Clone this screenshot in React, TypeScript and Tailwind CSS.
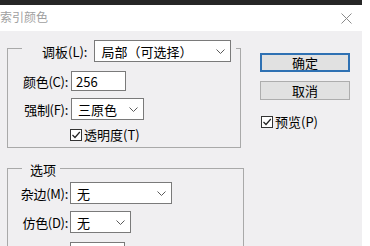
import React from "react";

const Chevron = () => (
  <svg width="9" height="5" viewBox="0 0 9 5" className="shrink-0">
    <path d="M0.5 0.5 L4.5 4.5 L8.5 0.5" fill="none" stroke="#5a5a5a" strokeWidth="1" />
  </svg>
);

const Select = ({ value, w }: { value: string; w: string }) => (
  <div className={`${w} h-[22px] bg-white border border-[#7a7a7a] flex items-center justify-between pl-[6px] pr-[5px] shrink-0`}>
    <span className="text-[13px] leading-none text-black">{value}</span>
    <Chevron />
  </div>
);

const Check = ({ label }: { label: string }) => (
  <div className="flex items-center gap-[2px] h-[13px]">
    <div className="w-[12px] h-[12px] bg-white border border-[#333] flex items-center justify-center">
      <svg width="10" height="10" viewBox="0 0 10 10">
        <path d="M1.5 5 L4 7.5 L8.8 2" fill="none" stroke="#222" strokeWidth="1.2" />
      </svg>
    </div>
    <span className="text-[13px] leading-none text-black">{label}</span>
  </div>
);

const Label = ({ text }: { text: string }) => (
  <span className="w-[52px] ml-[8px] text-right text-[13px] leading-none text-black shrink-0 tracking-[-0.3px]">{text}</span>
);

export default function App() {
  return (
    <div className="w-[370px] h-[246px] bg-white overflow-hidden font-['Noto_Sans_CJK_SC','Noto_Sans',sans-serif]">
      <div className="w-[362px] h-full flex flex-col">
        <div className="h-[5px] bg-[#262626] shrink-0" />
        <div className="h-[26px] bg-white flex items-center justify-between shrink-0">
          <span className="text-[12px] leading-none text-[#a0a0a0] mb-[2px]">索引颜色</span>
          <svg width="11" height="11" viewBox="0 0 11 11" className="mr-[10px]">
            <path d="M0.5 0.5 L10.5 10.5 M10.5 0.5 L0.5 10.5" stroke="#8a8a8a" strokeWidth="1" />
          </svg>
        </div>
        <div className="flex-1 bg-[#f0eff1] flex">
          <div className="w-[260px] shrink-0 pl-[7px] pt-[4px] flex flex-col">
            <fieldset className="w-[234px] border border-[#a9a9a9] pb-[6px]">
              <legend className="ml-[14px] pl-[20px] pr-[5px] pt-[5px] leading-none">
                <div className="flex items-center gap-[7px]">
                  <span className="text-[13px] leading-none text-black">调板(L):</span>
                  <Select value="局部（可选择）" w="w-[137px]" />
                </div>
              </legend>
              <div className="flex items-center gap-[3px] mt-[9px]">
                <Label text="颜色(C):" />
                <div className="w-[55px] h-[20px] bg-white border border-[#7a7a7a] flex items-center pl-[4px]">
                  <span className="text-[13px] leading-none text-black">256</span>
                </div>
              </div>
              <div className="flex items-center gap-[3px] mt-[7px]">
                <Label text="强制(F):" />
                <Select value="三原色" w="w-[73px]" />
              </div>
              <div className="mt-[8px] ml-[62px] leading-none">
                <Check label="透明度(T)" />
              </div>
            </fieldset>
            <fieldset className="w-[237px] border border-[#a9a9a9] mt-[12px] flex-1">
              <legend className="ml-[14px] pl-[8px] pr-[4px] leading-none">
                <span className="text-[13px] leading-none text-black">选项</span>
              </legend>
              <div className="flex items-center gap-[2px] mt-[6px]">
                <Label text="杂边(M):" />
                <Select value="无" w="w-[102px]" />
              </div>
              <div className="flex items-center gap-[2px] mt-[7px]">
                <Label text="仿色(D):" />
                <Select value="无" w="w-[61px]" />
              </div>
              <div className="flex items-center gap-[2px] mt-[9px]">
                <span className="w-[52px] ml-[8px] shrink-0" />
                <div className="w-[55px] h-[20px] bg-white border border-[#7a7a7a]" />
              </div>
            </fieldset>
          </div>
          <div className="flex flex-col pt-[22px]">
            <button className="w-[90px] h-[19px] bg-[#e1e1e1] border-2 border-[#2f71b3] flex items-center justify-center text-[13px] leading-none text-black">
              确定
            </button>
            <button className="w-[90px] h-[19px] mt-[9px] bg-[#e1e1e1] border border-[#adadad] flex items-center justify-center text-[13px] leading-none text-black">
              取消
            </button>
            <div className="mt-[15px] ml-[1px]">
              <Check label="预览(P)" />
            </div>
          </div>
        </div>
      </div>
    </div>
  );
}
